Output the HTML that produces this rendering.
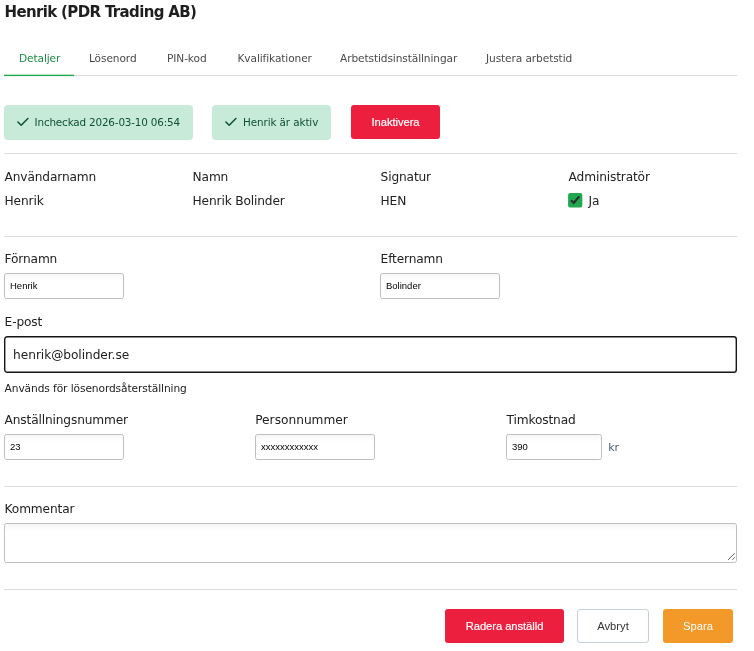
<!DOCTYPE html>
<html lang="sv">
<head>
<meta charset="utf-8">
<title>Henrik (PDR Trading AB)</title>
<style>
html,body{margin:0;padding:0;background:#fff;}
body{width:754px;height:651px;position:relative;overflow:hidden;will-change:transform;color:#212121;font-family:"DejaVu Sans","Liberation Sans",sans-serif;}
.t{position:absolute;white-space:nowrap;line-height:1;}
h1.t{margin:0;font-weight:bold;font-size:15px;left:4.5px;top:5px;letter-spacing:-0.65px;color:#1e1e1e;}
.tab{font-size:10.6px;top:53px;color:#4a4a4a;letter-spacing:-0.1px;}
.tab.on{color:#188a44;}
.hr{position:absolute;left:4px;width:733px;height:1px;background:#dcdcdc;}
.badge{position:absolute;top:105px;height:35px;background:#c8ead8;border-radius:4px;}
.badge .t{font-size:10.4px;color:#0f5132;top:12px;letter-spacing:-0.1px;}
.badge svg{position:absolute;top:12px;left:13px;}
.lbl{font-size:12.2px;color:#212121;letter-spacing:-0.15px;margin-top:-0.2px;margin-left:-0.4px}
.btn{position:absolute;box-sizing:border-box;border-radius:3px;font-family:"Liberation Sans",sans-serif;font-size:11.2px;text-align:center;line-height:34px;height:34px;color:#fff;}
.inp{position:absolute;box-sizing:border-box;height:26px;width:120px;border:1px solid #bfbfbf;border-radius:2.5px;font-family:"Liberation Sans",sans-serif;font-size:9.5px;line-height:24px;padding-left:5px;color:#000;background:linear-gradient(#f6f6f6,#fff 7px);}
</style>
</head>
<body>
<h1 class="t">Henrik (PDR Trading AB)</h1>

<div class="hr" style="top:75px"></div>
<svg style="position:absolute;left:4px;top:74px" width="70" height="3" viewBox="0 0 70 3"><rect x="0" y="0.7" width="70" height="1.4" fill="#1fa84f"/></svg>
<div class="t tab on" style="left:19px">Detaljer</div>
<div class="t tab" style="left:89px">Lösenord</div>
<div class="t tab" style="left:167px">PIN-kod</div>
<div class="t tab" style="left:237.5px">Kvalifikationer</div>
<div class="t tab" style="left:340px">Arbetstidsinställningar</div>
<div class="t tab" style="left:486px">Justera arbetstid</div>

<div class="badge" style="left:4px;width:189px">
  <svg width="13" height="10" viewBox="0 0 13 10"><path d="M0.9 5 L4.2 8.2 L10.9 1.5" fill="none" stroke="#0f5132" stroke-width="1.5" stroke-linecap="round" stroke-linejoin="round"/></svg>
  <div class="t" style="left:30.6px;letter-spacing:-0.17px">Incheckad 2026-03-10 06:54</div>
</div>
<div class="badge" style="left:212px;width:119px">
  <svg width="13" height="10" viewBox="0 0 13 10"><path d="M0.9 5 L4.2 8.2 L10.9 1.5" fill="none" stroke="#0f5132" stroke-width="1.5" stroke-linecap="round" stroke-linejoin="round"/></svg>
  <div class="t" style="left:31px">Henrik är aktiv</div>
</div>
<div class="btn" style="left:351px;top:105px;width:89px;background:#ed1f3e;-webkit-text-stroke:0.18px #fff;letter-spacing:-0.05px">Inaktivera</div>

<div class="hr" style="top:153px"></div>

<div class="t lbl" style="left:5px;top:171px">Användarnamn</div>
<div class="t lbl" style="left:193px;top:171px">Namn</div>
<div class="t lbl" style="left:381px;top:171px">Signatur</div>
<div class="t lbl" style="left:569px;top:171px">Administratör</div>
<div class="t lbl" style="left:5px;top:195px">Henrik</div>
<div class="t lbl" style="left:193px;top:195px">Henrik Bolinder</div>
<div class="t lbl" style="left:381px;top:195px">HEN</div>
<svg style="position:absolute;left:568px;top:193px" width="15" height="15" viewBox="0 0 15 15"><rect x="0.1" y="0" width="14.2" height="14.4" rx="2" fill="#1fa84f"/><path d="M3.0 7.3 L5.7 10.0 L11.3 3.3" fill="none" stroke="#2e2b33" stroke-width="2.1"/></svg>
<div class="t lbl" style="left:589px;top:195px">Ja</div>

<div class="hr" style="top:236px"></div>

<div class="t lbl" style="left:5px;top:253px">Förnamn</div>
<div class="t lbl" style="left:381px;top:253px">Efternamn</div>
<div class="inp" style="left:4px;top:273px">Henrik</div>
<div class="inp" style="left:380px;top:273px">Bolinder</div>

<div class="t lbl" style="left:5px;top:316px">E-post</div>
<svg style="position:absolute;left:4px;top:336px" width="733" height="37" viewBox="0 0 733 37"><rect x="0.7" y="0.7" width="731.6" height="35.6" rx="2.6" fill="#fff" stroke="#151515" stroke-width="1.4"/></svg>
<div class="t lbl" style="left:13.5px;top:349px;letter-spacing:-0.06px">henrik@bolinder.se</div>
<div class="t" style="left:4.6px;top:384px;font-size:10.65px;letter-spacing:-0.1px">Används för lösenordsåterställning</div>

<div class="t lbl" style="left:5px;top:414px">Anställningsnummer</div>
<div class="t lbl" style="left:255.6px;top:414px;letter-spacing:0px">Personnummer</div>
<div class="t lbl" style="left:507px;top:414px">Timkostnad</div>
<div class="inp" style="left:4px;top:434px">23</div>
<div class="inp" style="left:255px;top:434px">xxxxxxxxxxxx</div>
<div class="inp" style="left:506px;top:434px;width:96px">390</div>
<div class="t" style="left:608.3px;top:441.7px;font-size:11px;letter-spacing:-0.2px;color:#4d5d6b">kr</div>

<div class="hr" style="top:486px"></div>
<div class="t lbl" style="left:5px;top:503px">Kommentar</div>
<div style="position:absolute;box-sizing:border-box;left:4px;top:523px;width:733px;height:40px;border:1px solid #bfbfbf;border-radius:2.5px;background:linear-gradient(#f6f6f6,#fff 7px)">
  <svg width="10" height="10" viewBox="0 0 10 10" style="position:absolute;right:0px;bottom:0px"><path d="M8.8 1.1 L2.1 7.9 M8.8 5.3 L6.2 7.9" stroke="#555" stroke-width="0.9" fill="none"/></svg>
</div>
<div class="hr" style="top:589px"></div>

<div class="btn" style="left:445px;top:609px;width:119px;background:#ed1f3e;-webkit-text-stroke:0.18px #fff;letter-spacing:-0.05px">Radera anställd</div>
<div class="btn" style="left:577px;top:609px;width:72px;background:#fff;border:1px solid #c5d0dc;color:#333;line-height:32px">Avbryt</div>
<div class="btn" style="left:663px;top:609px;width:70px;background:#f2992a">Spara</div>
</body>
</html>
